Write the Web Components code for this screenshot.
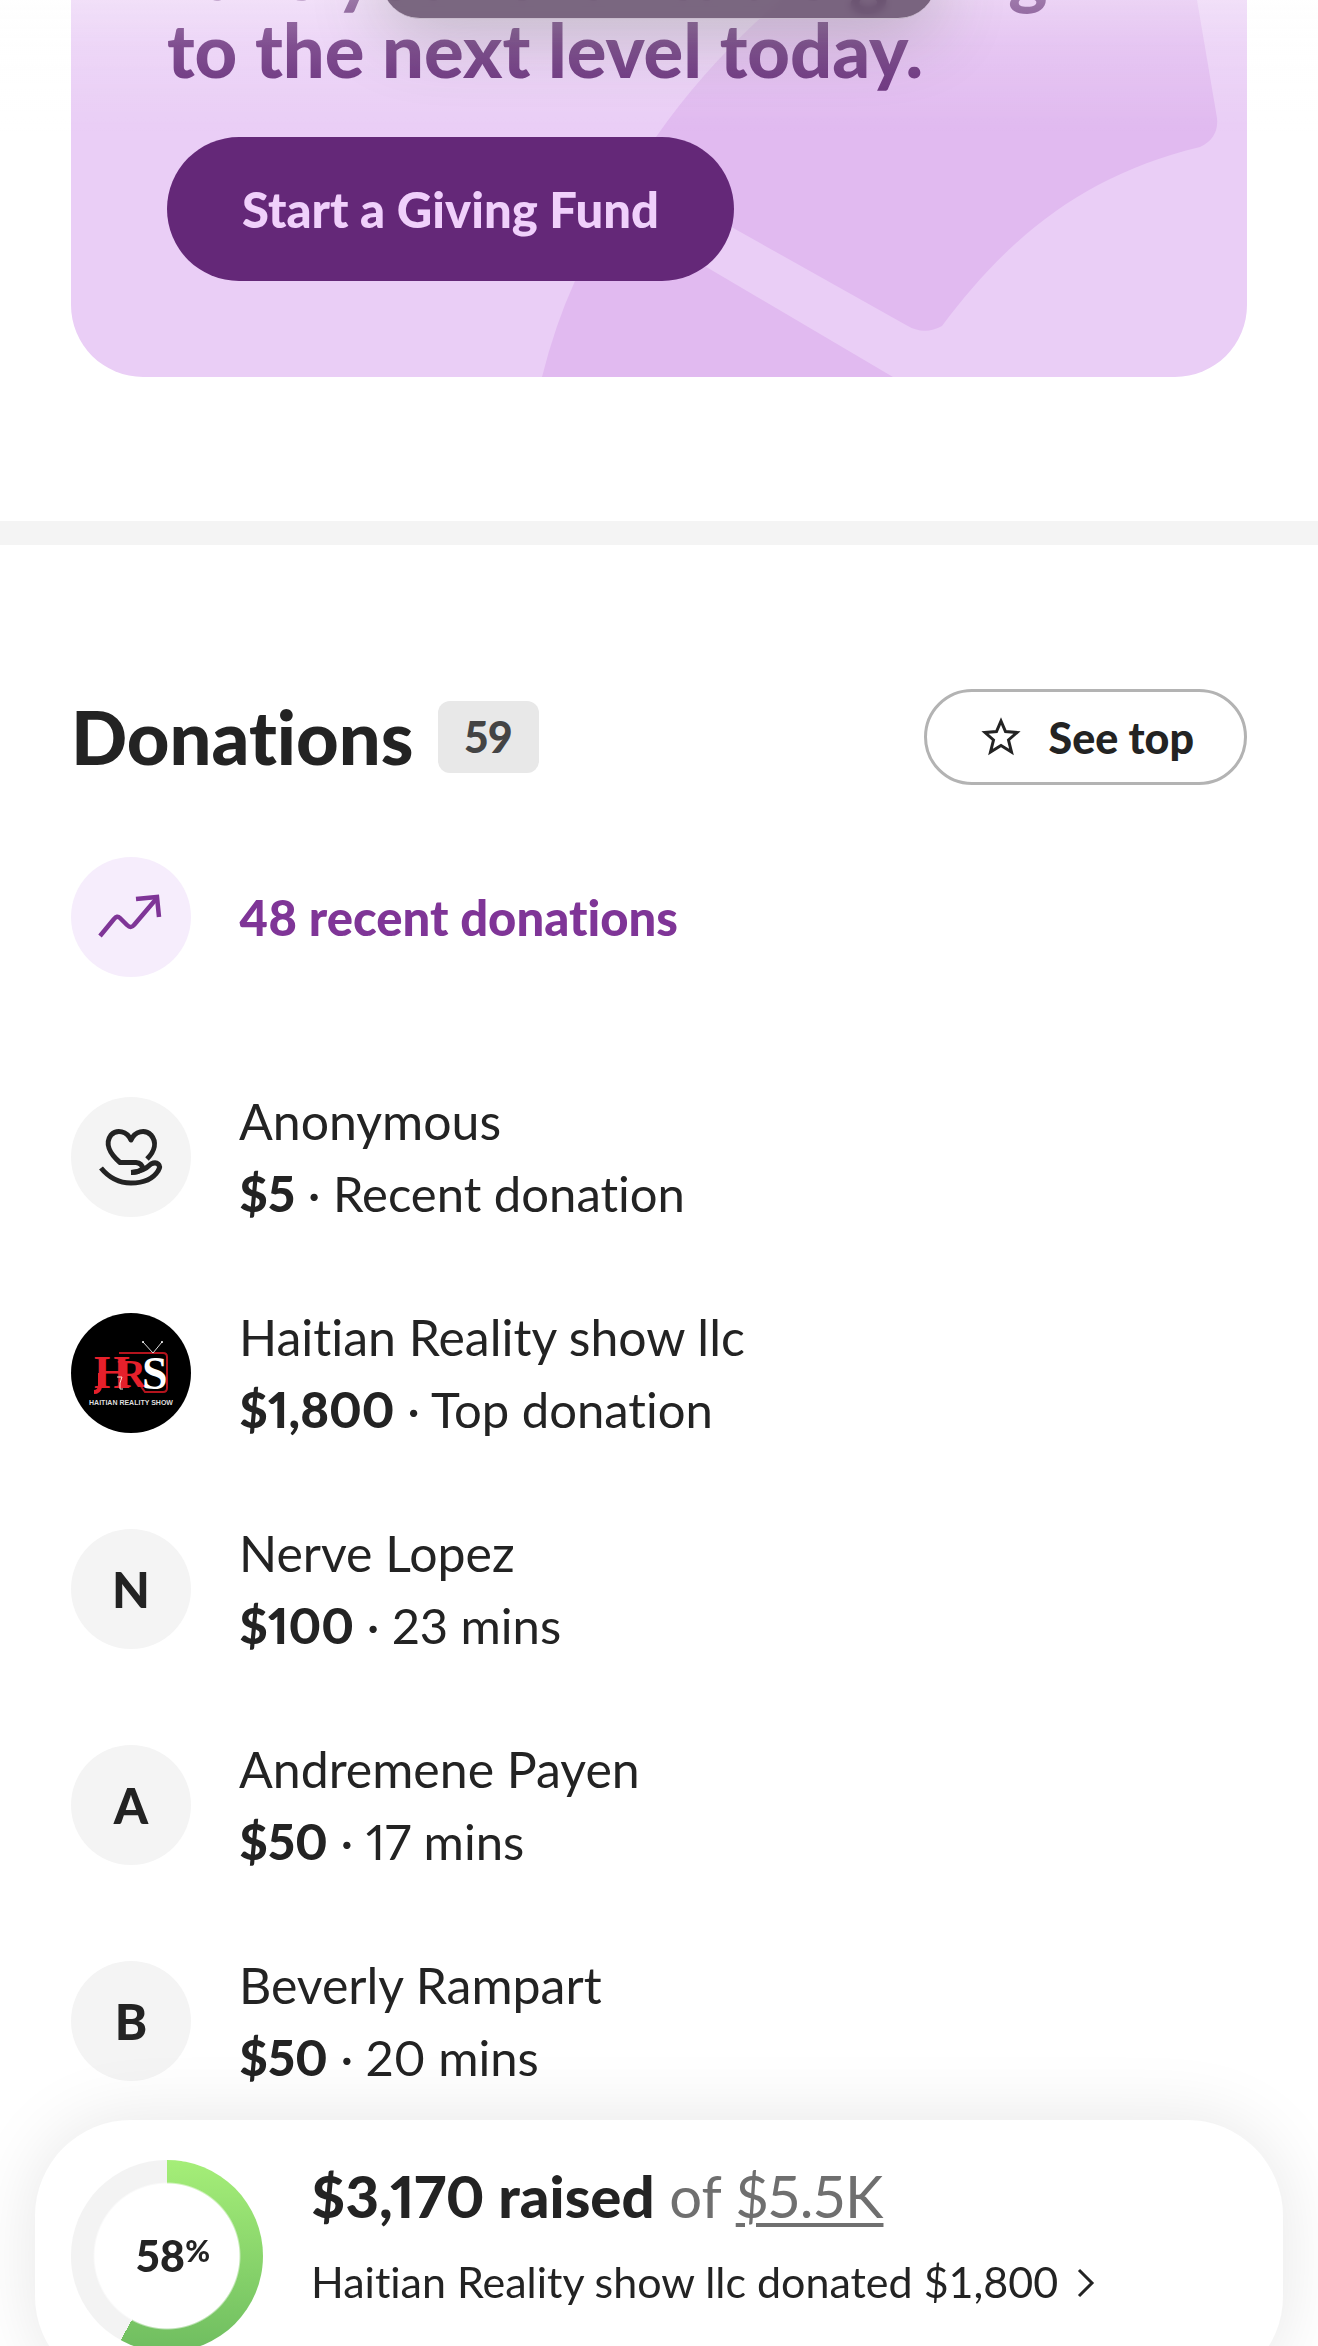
<!DOCTYPE html>
<html lang="en">
<head>
<meta charset="utf-8">
<meta name="viewport" content="width=device-width, initial-scale=1">
<title>Donations</title>
<style>
	html {
		background: #fff;
	}
	body {
		margin: 0;
		min-height: 100vh;
		overflow: hidden;
		font-family: Lato, "Open Sans", sans-serif;
		font-variant-ligatures: none;
		font-variant-numeric: proportional-nums;
		color: #232323;
	}
	/* the page opens part way down, with the top of the card scrolled off */
	main {
		margin-top: -163px;
	}
</style>
</head>
<body>
<main>
	<giving-card>
		<span slot="title">Take your charitable giving<br>to the next level today.</span>
		<span slot="action">Start a Giving Fund</span>
	</giving-card>
	<donation-list heading="Donations" count="59">
		<donation-trend>48 recent donations</donation-trend>
		<donation-row name="Anonymous" amount="$5" note="Recent donation" avatar="heart"></donation-row>
		<donation-row name="Haitian Reality show llc" amount="$1,800" note="Top donation" avatar="logo"></donation-row>
		<donation-row name="Nerve Lopez" amount="$100" note="23 mins"></donation-row>
		<donation-row name="Andremene Payen" amount="$50" note="17 mins"></donation-row>
		<donation-row name="Beverly Rampart" amount="$50" note="20 mins"></donation-row>
	</donation-list>
</main>
<page-toolbar></page-toolbar>
<progress-bar-card percent="58" raised="$3,170" goal="$5.5K">Haitian Reality show llc donated $1,800</progress-bar-card>

<script>
// giving-card
class GivingCard extends HTMLElement {
	constructor() {
		super();
		this.attachShadow({ mode: 'open' });
		this.shadowRoot.innerHTML = `
			<style>
				:host {
					display: block;
					padding: 0 71px 144px;
				}
				.card {
					position: relative;
					display: flex;
					flex-direction: column;
					align-items: flex-start;
					gap: 48px;
					padding: 96px;
					border-radius: 72px;
					background: #eacef6;
					overflow: hidden;
				}
				.art {
					position: absolute;
					inset: 0;
					width: 100%;
					height: 100%;
				}
				h2 {
					position: relative;
					margin: 0;
					font-size: 74px;
					font-weight: 900;
					line-height: 78px;
					color: #642878;
				}
				button {
					position: relative;
					height: 144px;
					padding: 0 75px;
					border: 0;
					border-radius: 72px;
					background: #642878;
					color: #f0d0fb;
					font: 900 49px Lato, sans-serif;
					cursor: pointer;
				}
			</style>
			<section class="card">
				<svg class="art" viewBox="71 -163 1176 540" preserveAspectRatio="xMaxYMax slice" fill="#e1baf0" aria-hidden="true">
					<path d="M920 -100 C860 -60 820 -35 780 0 Q705 66 656 137 L625 165 L735 229 L906 325 Q924 336 942 326 C1010 235 1085 175 1200 147 Q1219 138 1217 118 L1197 0 L1180 -100Z"/>
					<path d="M542 377 Q555 325 575 281 L612 213 L708 268 L893 377Z"/>
				</svg>
				<h2><slot name="title"></slot></h2>
				<button type="button"><slot name="action"></slot></button>
			</section>
		`;
	}
}

// donation-list
class DonationList extends HTMLElement {
	constructor() {
		super();
		this.attachShadow({ mode: 'open' });
	}

	connectedCallback() {
		this.shadowRoot.innerHTML = `
			<style>
				:host {
					display: block;
					border-top: 24px solid #f4f4f4;
					padding: 144px 71px 72px;
				}
				header {
					display: flex;
					align-items: center;
					gap: 24px;
					height: 96px;
					margin-bottom: 72px;
				}
				h2 {
					margin: 0;
					font-size: 74px;
					font-weight: 900;
					line-height: 96px;
				}
				.count {
					padding: 0 27px;
					border-radius: 12px;
					background: #e8e8e8;
					color: #444;
					font-size: 43px;
					font-weight: 900;
					line-height: 72px;
				}
				button {
					display: flex;
					align-items: center;
					gap: 24px;
					height: 96px;
					margin-left: auto;
					padding: 0 50px;
					border: 3px solid #b3b3b3;
					border-radius: 48px;
					background: #fff;
					color: inherit;
					font: 900 43px Lato, sans-serif;
					cursor: pointer;
				}
				.items {
					display: flex;
					flex-direction: column;
					gap: 72px;
				}
			</style>
			<header>
				<h2>${this.getAttribute('heading')}</h2>
				<span class="count">${this.getAttribute('count')}</span>
				<button type="button">
					<svg width="48" height="48" viewBox="0 0 48 48" fill="none" stroke="currentColor" stroke-width="3" aria-hidden="true">
						<path d="M24 8 L28.500 18.500 L40 19.500 L31.500 27 L34.500 39 L24 32.500 L13.500 39 L16.500 27 L8 19.500 L19.500 18.500Z"/>
					</svg>
					<span>See top</span>
				</button>
			</header>
			<div class="items"><slot></slot></div>
		`;
	}
}

// donation-trend
class DonationTrend extends HTMLElement {
	constructor() {
		super();
		this.attachShadow({ mode: 'open' });
		this.shadowRoot.innerHTML = `
			<style>
				:host {
					display: flex;
					align-items: center;
					gap: 48px;
					margin-bottom: 36px;
					color: #7f3597;
					font-size: 49px;
					font-weight: 900;
				}
				svg {
					flex: none;
					border-radius: 50%;
					background: #f6edfc;
				}
			</style>
			<svg width="120" height="120" viewBox="0 0 120 120" fill="none" stroke="currentColor" stroke-width="4.500" stroke-linejoin="round" aria-hidden="true">
				<path d="M29 79 L43 62 Q46 58 49 61 L56 68 Q60 72 63 68 L86 41"/>
				<path d="M65 42 L86 40 L88 60" stroke-linejoin="miter"/>
			</svg>
			<span><slot></slot></span>
		`;
	}
}

// donation-row
const AVATARS = {
	heart: `
		<svg width="120" height="120" viewBox="0 0 120 120" fill="none" stroke="#232323" stroke-width="5" stroke-linejoin="round" aria-hidden="true">
			<path d="M76 62 C84 54 86 45 80 38 C74 32 64 34 60 43 C56 34 46 32 40 38 C34 46 38 56 49 65.500 H65 Q71 66 72 72 M71 72 C68 75 65 75.500 60 75.500"/>
			<path d="M30 71 C39 82 49 86 60 86 C72 86 82 82 87 74 C91 68 86 64 80 67 C76 71 71 75 60 75.500"/>
		</svg>
	`,
	logo: `
		<svg width="120" height="120" viewBox="0 0 120 120" role="img" aria-label="HRS Haitian Reality Show">
			<circle cx="60" cy="60" r="60" fill="#000"/>
			<path d="M48 40 H92 Q96 40 96 44 V75 Q96 79 92 79 H74 L62 62" fill="none" stroke="#b3141d" stroke-width="2"/>
			<g font-family="Liberation Serif, serif">
				<text x="23" y="75" font-size="46" fill="#e6202b">H</text>
				<text x="46" y="74" font-size="40" font-weight="700" fill="#e6202b">R</text>
				<text x="71" y="76" font-size="46" font-weight="700" fill="#fff">S</text>
			</g>
			<path d="M29 60 V74 Q28 79 23 79 M50 61 V75" fill="none" stroke="#e6202b" stroke-width="4"/>
			<path d="M72 29 L82 40 L91 29" fill="none" stroke="#ddd" stroke-width="1"/>
			<circle cx="72" cy="29" r="1" fill="#fff"/>
			<circle cx="91" cy="29" r="1" fill="#fff"/>
			<path d="M46 64 H51 L49 70 V76 H52" fill="none" stroke="#ffd9cc" stroke-width="1"/>
			<text x="60" y="92" font-family="Liberation Sans, sans-serif" font-size="7" fill="#ddd" text-anchor="middle">HAITIAN REALITY SHOW</text>
		</svg>
	`,
};

class DonationRow extends HTMLElement {
	constructor() {
		super();
		this.attachShadow({ mode: 'open' });
	}

	connectedCallback() {
		const name = this.getAttribute('name');
		const avatar = AVATARS[this.getAttribute('avatar')] || name.charAt(0);

		this.shadowRoot.innerHTML = `
			<style>
				:host {
					display: flex;
					align-items: center;
					gap: 48px;
					font-size: 50px;
					line-height: 72px;
				}
				.avatar {
					display: flex;
					align-items: center;
					justify-content: center;
					flex: none;
					width: 120px;
					height: 120px;
					border-radius: 50%;
					background: #f4f4f4;
					font-size: 49px;
					font-weight: 900;
				}
				.detail {
					font-size: 49px;
				}
				strong {
					font-weight: 900;
				}
			</style>
			<div class="avatar">${avatar}</div>
			<div>
				<div>${name}</div>
				<div class="detail"><strong>${this.getAttribute('amount')}</strong> · ${this.getAttribute('note')}</div>
			</div>
		`;
	}
}

// page-toolbar: floating glass bar, mostly above the top edge
class PageToolbar extends HTMLElement {
	constructor() {
		super();
		this.attachShadow({ mode: 'open' });
		this.shadowRoot.innerHTML = `
			<style>
				:host {
					position: fixed;
					inset: 0 0 auto;
					display: flex;
					justify-content: center;
					height: 132px;
					background: linear-gradient(rgba(253, 253, 253, .38), rgba(253, 253, 253, .18) 35%, rgba(253, 253, 253, 0));
					pointer-events: none;
				}
				.bar {
					width: 42%;
					height: 76px;
					margin-top: -58px;
					border-radius: 38px;
					border-bottom: 1px solid #c9bccd;
					background: rgba(92, 72, 98, .8);
					backdrop-filter: blur(4px);
					box-shadow: 0 12px 72px rgba(70, 85, 65, .3);
				}
			</style>
			<div class="bar"></div>
		`;
	}
}

// progress-bar-card
class ProgressBarCard extends HTMLElement {
	constructor() {
		super();
		this.attachShadow({ mode: 'open' });
	}

	connectedCallback() {
		const percent = Number(this.getAttribute('percent'));

		this.shadowRoot.innerHTML = `
			<style>
				:host {
					position: fixed;
					inset: auto 35px -46px;
					display: flex;
					gap: 48px;
					padding: 40px 36px;
					border-radius: 96px;
					background: #fff;
					box-shadow: 0 0 72px rgba(0, 0, 0, .1);
				}
				.ring {
					display: grid;
					place-items: center;
					flex: none;
					width: 192px;
					height: 192px;
				}
				.ring > * {
					grid-area: 1 / 1;
				}
				.chart {
					width: 192px;
					height: 192px;
					border-radius: 50%;
					background:
						radial-gradient(#fff 72px, transparent 74px),
						conic-gradient(transparent ${percent}%, #f3f3f3 0),
						linear-gradient(#a5ee78, #6fbd60);
				}
				.percent {
					display: flex;
					padding-left: 12px;
					font-size: 43px;
					font-weight: 900;
					line-height: 48px;
				}
				.percent small {
					font-size: 30px;
					line-height: 36px;
				}
				.text {
					display: flex;
					flex-direction: column;
					align-items: flex-start;
					gap: 20px;
				}
				.total {
					font-size: 58px;
					line-height: 72px;
					color: #6f6f6f;
				}
				strong {
					font-weight: 900;
					color: #232323;
				}
				a {
					color: inherit;
					text-decoration-thickness: 4px;
					text-underline-offset: 5px;
				}
				button {
					display: flex;
					align-items: center;
					gap: 12px;
					padding: 0;
					border: 0;
					background: none;
					color: inherit;
					font: 43px/60px Lato, sans-serif;
					font-variant-ligatures: none;
					cursor: pointer;
				}
			</style>
			<div class="ring">
				<div class="chart"></div>
				<div class="percent">${percent}<small>%</small></div>
			</div>
			<div class="text">
				<div class="total"><strong>${this.getAttribute('raised')} raised</strong> of <a href="#goal">${this.getAttribute('goal')}</a></div>
				<button type="button">
					<span><slot></slot></span>
					<svg width="30" height="36" viewBox="0 0 30 36" fill="none" stroke="currentColor" stroke-width="3" aria-hidden="true">
						<path d="M9 6 L22 19 L9 32"/>
					</svg>
				</button>
			</div>
		`;
	}
}

customElements.define('giving-card', GivingCard);
customElements.define('donation-list', DonationList);
customElements.define('donation-trend', DonationTrend);
customElements.define('donation-row', DonationRow);
customElements.define('page-toolbar', PageToolbar);
customElements.define('progress-bar-card', ProgressBarCard);
</script>
</body>
</html>
